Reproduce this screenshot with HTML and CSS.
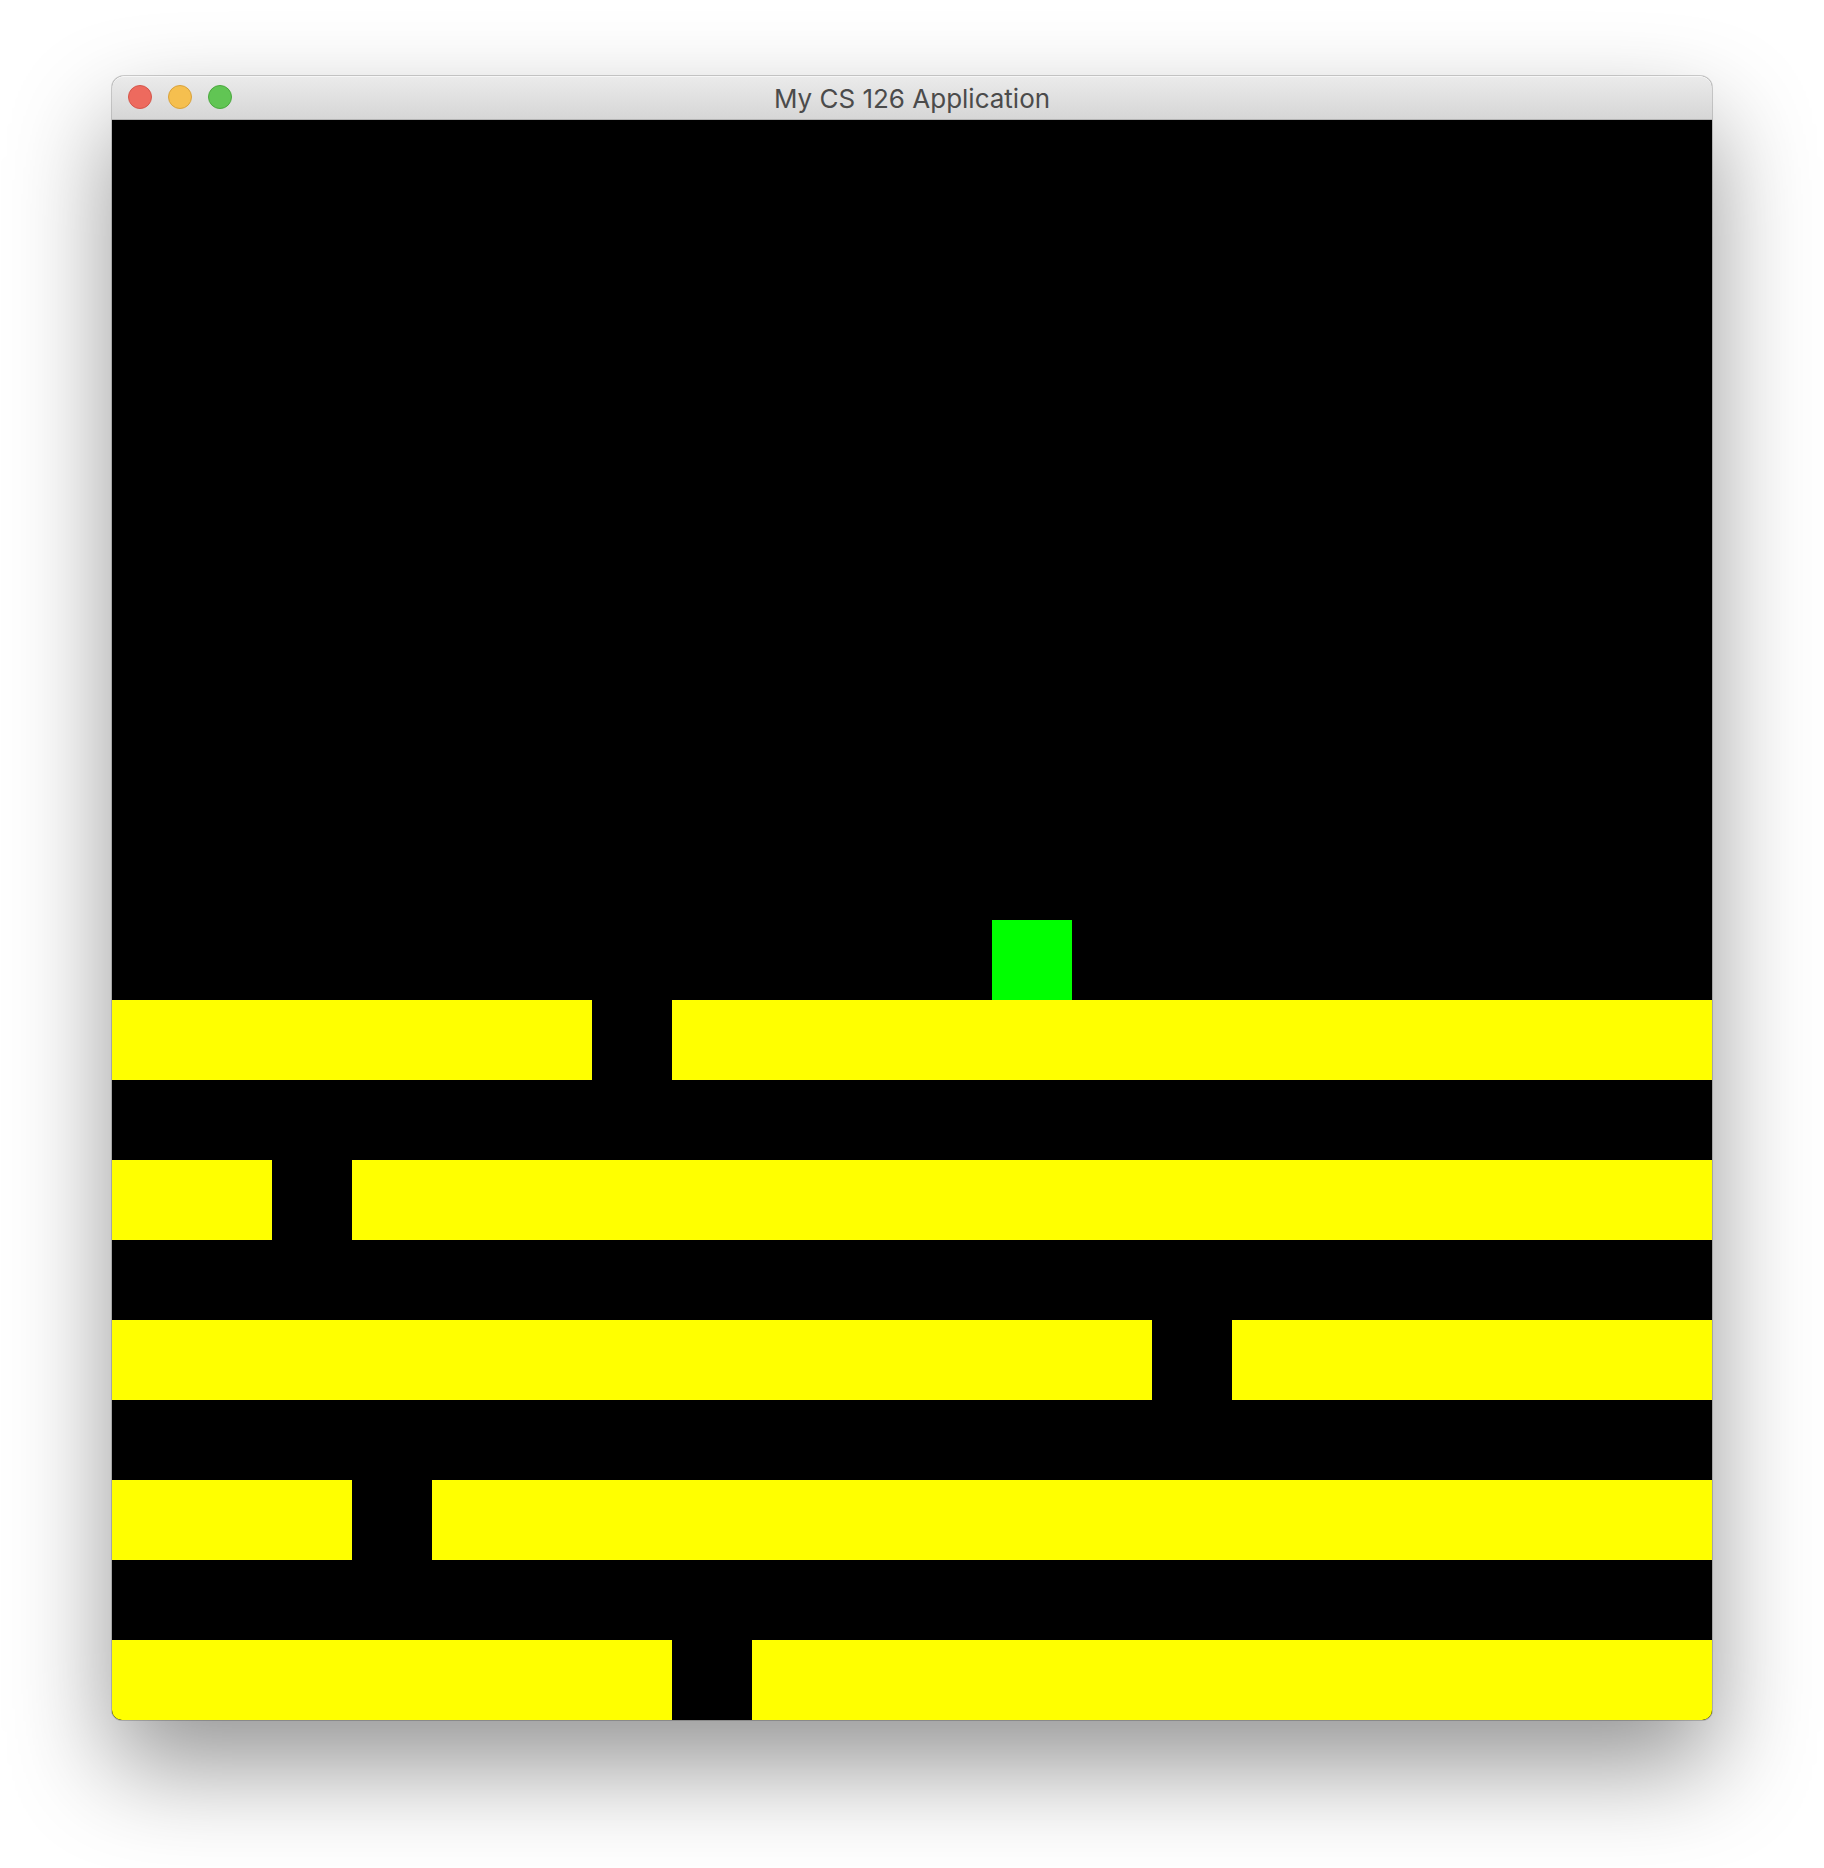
FILE: index.html
```html
<!DOCTYPE html>
<html>
<head>
<meta charset="utf-8">
<link rel="stylesheet" href="styles.css">
</head>
<body>
<div class="window">
  <div class="titlebar">
    <div class="lights">
      <span class="light red"></span>
      <span class="light yellow"></span>
      <span class="light green"></span>
    </div>
    <div class="title">My CS 126 Application</div>
  </div>
  <div class="canvas">
    <div class="player"></div>
    <div class="plat r12 c1-6"></div>
    <div class="plat r12 c8-20"></div>
    <div class="plat r14 c1-2"></div>
    <div class="plat r14 c4-20"></div>
    <div class="plat r16 c1-13"></div>
    <div class="plat r16 c15-20"></div>
    <div class="plat r18 c1-3"></div>
    <div class="plat r18 c5-20"></div>
    <div class="plat r20 c1-7"></div>
    <div class="plat r20 c9-20"></div>
  </div>
</div>
</body>
</html>
```
FILE: styles.css
```css
html, body {
  margin: 0;
  padding: 0;
  background: #ffffff;
}
body {
  width: 1824px;
  height: 1868px;
  overflow: hidden;
  padding-top: 76px;
  box-sizing: border-box;
}
.window {
  margin-left: 112px;
  width: 1600px;
  border-radius: 12px 12px 10px 10px;
  box-shadow: 0 46px 100px rgba(0,0,0,0.42), 0 0 0 1px rgba(0,0,0,0.18);
  background: #000;
}
.titlebar {
  height: 43px;
  border-bottom: 1px solid #b4b4b4;
  border-radius: 12px 12px 0 0;
  background: linear-gradient(#ebebeb, #d6d6d6);
  box-shadow: inset 0 1px 0 #f6f6f6;
  display: flex;
  align-items: center;
  position: relative;
}
.lights {
  display: flex;
  gap: 16px;
  padding-left: 16px;
  margin-top: -1px;
}
.light {
  width: 24px;
  height: 24px;
  border-radius: 50%;
  box-sizing: border-box;
}
.light.red { background: #ed6a5e; border: 1px solid #d5564b; }
.light.yellow { background: #f5bf4f; border: 1px solid #d9a23b; }
.light.green { background: #61c554; border: 1px solid #4ba83e; }
.title {
  position: absolute;
  left: 0;
  right: 0;
  top: 0;
  bottom: 0;
  display: flex;
  align-items: center;
  justify-content: center;
  font-family: Inter, "Noto Sans", sans-serif;
  font-size: 26px;
  color: #4b4b4b;
  padding-top: 1px;
}
.canvas {
  display: grid;
  grid-template-columns: repeat(20, 80px);
  grid-template-rows: repeat(20, 80px);
  background: #000;
  border-radius: 0 0 10px 10px;
  overflow: hidden;
}
.plat { background: #ffff00; }
.player { background: #00ff00; grid-row: 11; grid-column: 12; }
.r12 { grid-row: 12; }
.r14 { grid-row: 14; }
.r16 { grid-row: 16; }
.r18 { grid-row: 18; }
.r20 { grid-row: 20; }
.c1-6 { grid-column: 1 / 7; }
.c8-20 { grid-column: 8 / 21; }
.c1-2 { grid-column: 1 / 3; }
.c4-20 { grid-column: 4 / 21; }
.c1-13 { grid-column: 1 / 14; }
.c15-20 { grid-column: 15 / 21; }
.c1-3 { grid-column: 1 / 4; }
.c5-20 { grid-column: 5 / 21; }
.c1-7 { grid-column: 1 / 8; }
.c9-20 { grid-column: 9 / 21; }
```
